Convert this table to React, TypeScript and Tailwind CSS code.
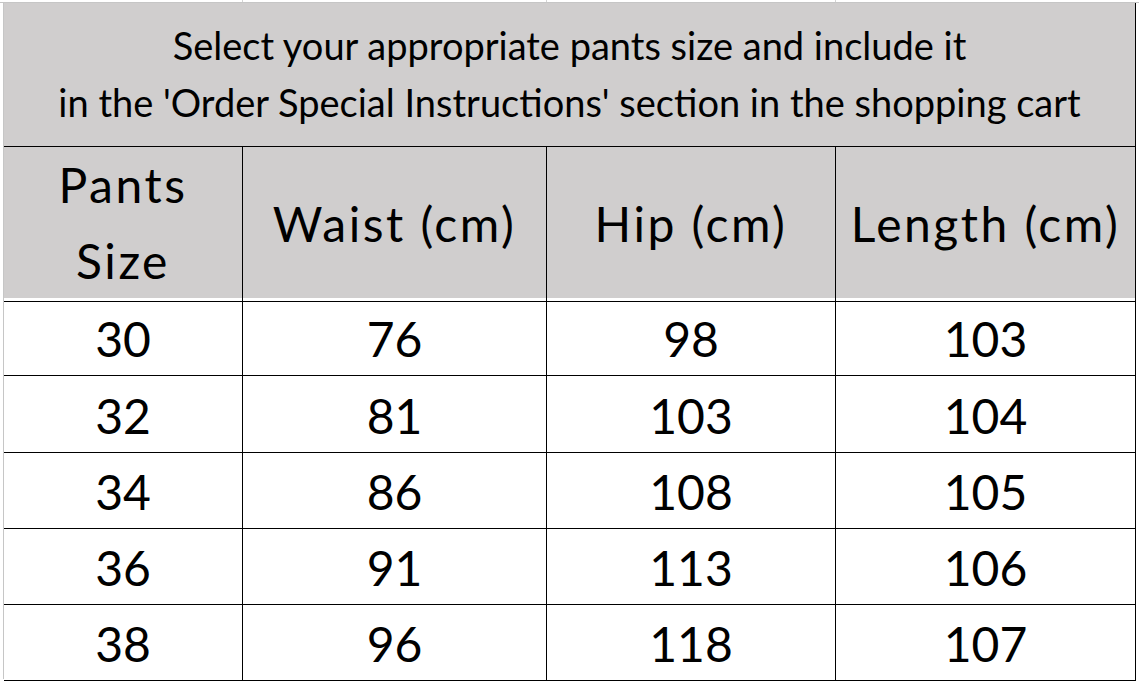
const rows = [
  ['30', '76', '98', '103'],
  ['32', '81', '103', '104'],
  ['34', '86', '108', '105'],
  ['36', '91', '113', '106'],
  ['38', '96', '118', '107'],
];

export default function App() {
  return (
    <div
      className="w-[1139px] h-[682px] bg-white overflow-hidden text-black"
      style={{ fontFamily: 'Lato, "Open Sans", sans-serif' }}
    >
      {/* gridline strip above the table */}
      <div className="h-[2px] pl-[3px] grid grid-cols-[240px_304px_289px_300px]">
        <div className="border-r border-[#d4d4d4]" />
        <div className="border-r border-[#d4d4d4]" />
        <div className="border-r border-[#d4d4d4]" />
        <div />
      </div>

      <div className="pl-[3px] border-t border-[#c6c6c6]">
        <div className="w-[1133px] border-l border-[#c6c6c6]">
          {/* title */}
          <div className="h-[144px] bg-[#d0cece] border-r border-b border-black flex flex-col items-center justify-center text-[38px] leading-[57px] pb-[2px]">
            <div>Select your appropriate pants size and include it</div>
            <div>in the 'Order Special Instructions' section in the shopping cart</div>
          </div>

          {/* header */}
          <div className="grid grid-cols-[239px_304px_289px_300px] h-[151px] bg-[#d0cece] text-[48px] tracking-[2.5px]">
            <div className="border-r border-b border-black flex flex-col items-center justify-center leading-[76px] pb-[2px]">
              <div>Pants</div>
              <div>Size</div>
            </div>
            <div className="border-r border-b border-black flex items-center justify-center">Waist (cm)</div>
            <div className="border-r border-b border-black flex items-center justify-center">Hip (cm)</div>
            <div className="border-r border-b border-black flex items-center justify-center">Length (cm)</div>
          </div>

          {/* data rows */}
          {rows.map((row, i) => (
            <div
              key={row[0]}
              className={`grid grid-cols-[239px_304px_289px_300px] text-[48px] ${i === 0 ? 'h-[77px]' : 'h-[76px]'}`}
            >
              {row.map((val, j) => (
                <div key={j} className="border-r border-b border-black flex items-center justify-center pt-[5px]">
                  {val}
                </div>
              ))}
            </div>
          ))}
        </div>
      </div>
    </div>
  );
}
